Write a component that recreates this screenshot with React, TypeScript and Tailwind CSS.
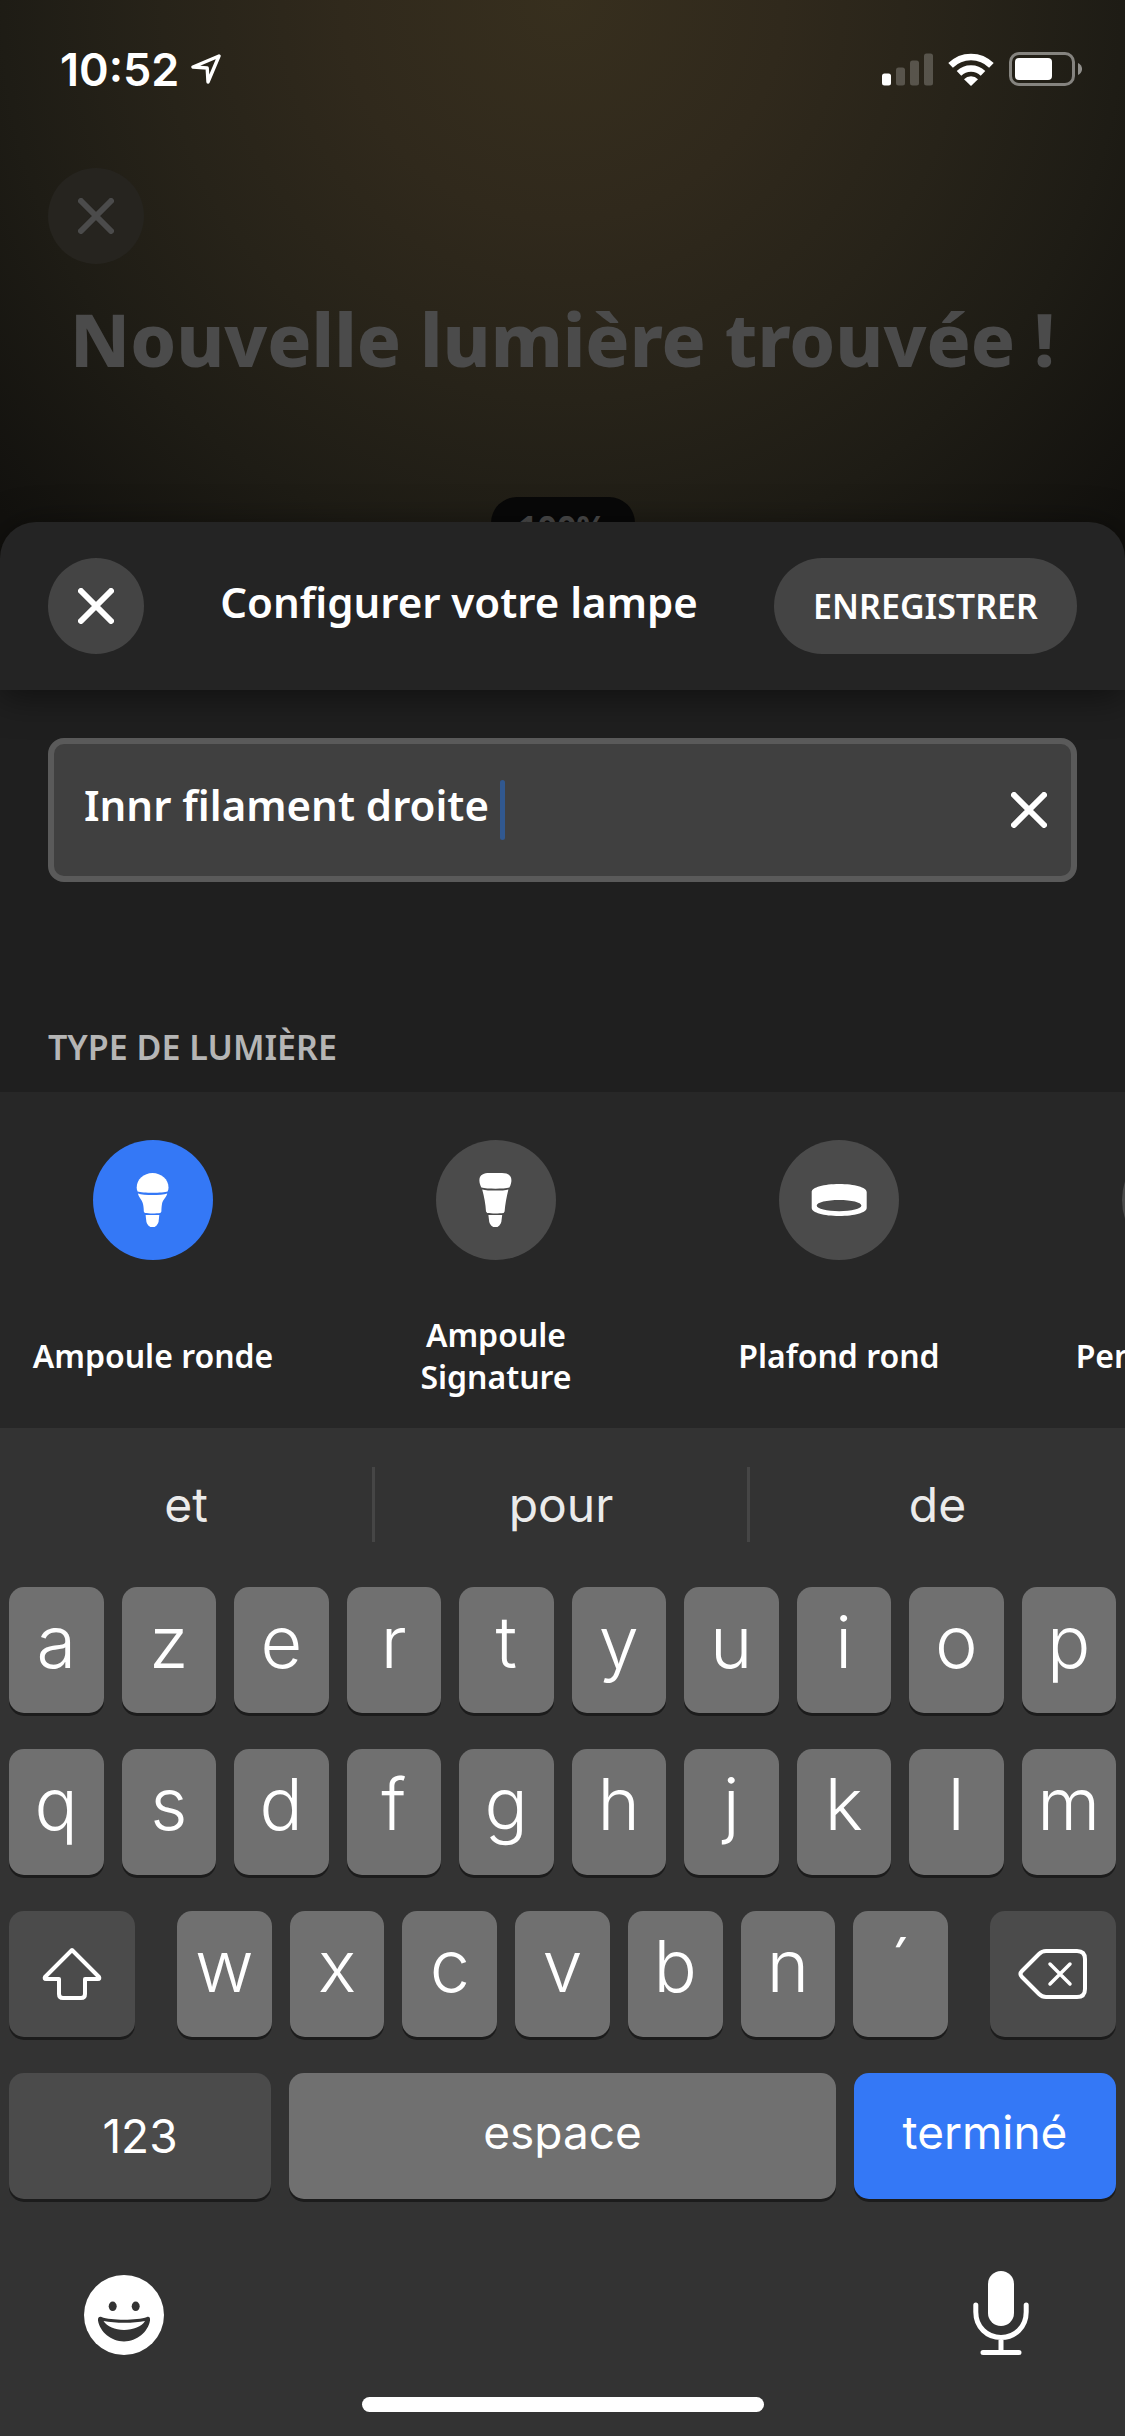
import { useState } from 'react';
import type { ReactNode } from 'react';

const LIGHT_TYPES = [
  { id: 'round', label: 'Ampoule ronde', icon: <RoundBulb /> },
  { id: 'signature', label: 'Ampoule Signature', icon: <SignatureBulb /> },
  { id: 'ceiling', label: 'Plafond rond', icon: <CeilingLamp /> },
  { id: 'pendant', label: 'Pendant rond', icon: <PendantLamp /> },
];

const SUGGESTIONS = ['et', 'pour', 'de'];
const ROW_1 = ['a', 'z', 'e', 'r', 't', 'y', 'u', 'i', 'o', 'p'];
const ROW_2 = ['q', 's', 'd', 'f', 'g', 'h', 'j', 'k', 'l', 'm'];
const ROW_3 = ['w', 'x', 'c', 'v', 'b', 'n', '´'];

function RoundBulb() {
  return (
    <svg viewBox="0 0 120 120" className="size-full" fill="white">
      <path d="M44.6 51.4C43.9 50 43.7 48.8 43.7 47.5C43.7 39.4 50.8 33 59.5 33S75.5 39.4 75.5 47.5C75.5 48.8 75.3 50 74.6 51.4C70 53.1 49.5 53.1 44.6 51.4Z" />
      <path d="M45 53.6C51 55.6 68 55.6 74.2 53.6C73.8 57 69.6 60 69 64C68.5 67 68.4 69 68.4 71.5L67.4 73C63 73.6 56 73.6 51.8 73L50.8 71.5C50.8 69 50.6 67 50 64C49.2 60 45.4 57 45 53.6Z" />
      <path d="M52.6 75H66.3L65.6 81.5C64.8 84.6 62.6 87 61 87H58C56.4 87 54 84.6 53.4 81.5Z" />
    </svg>
  );
}

function SignatureBulb() {
  return (
    <svg viewBox="0 0 120 120" className="size-full" fill="white">
      <path d="M45.4 47.6C43.8 44.5 43.4 42.5 43.4 40C43.4 34.5 48.5 33 53 33H66C70.5 33 75.4 34.5 75.4 40C75.4 42.5 75 44.5 73.4 47.6C68 49.2 51 49.2 45.4 47.6Z" />
      <path d="M46.2 49.4C52 51 67 51 72.4 49.4C70.6 57 69.2 64 68.6 71.5L67.6 73C63 73.6 55.6 73.6 51.2 73L50 71.5C49.6 64 48.2 57 46.2 49.4Z" />
      <path d="M52.4 75H66.2L65.4 81.5C64.6 84.6 62.4 87 60.8 87H57.8C56.2 87 53.8 84.6 53.2 81.5Z" />
    </svg>
  );
}

function CeilingLamp() {
  return (
    <svg viewBox="0 0 120 120" className="size-full" fill="white">
      <path
        fillRule="evenodd"
        d="M32.7 52C32.7 47.4 45 44 60.2 44S87.7 47.4 87.7 52V68C87.7 72.6 75.4 76 60.2 76S32.7 72.6 32.7 68ZM60.2 60C48 60 37.7 62.4 37.7 65.6S48 71.2 60.2 71.2S82.4 68.8 82.4 65.6S72.4 60 60.2 60Z"
      />
    </svg>
  );
}

function PendantLamp() {
  return (
    <svg viewBox="0 0 120 120" className="size-full" fill="white">
      <path d="M59 33H61V52C70 53 77 60 78 70H42C43 60 50 53 59 52Z" />
    </svg>
  );
}

function CrossIcon() {
  return (
    <svg viewBox="0 0 36 36" className="size-9" fill="none" stroke="currentColor" strokeWidth="6" strokeLinecap="round">
      <path d="M3 3L33 33M33 3L3 33" />
    </svg>
  );
}

function StatusBar() {
  return (
    <header className="flex h-[138px] items-center justify-between pr-[43px] pl-[60px] font-['Inter',sans-serif]">
      <div className="flex items-center gap-3">
        <span className="text-[45px] leading-none font-semibold">10:52</span>
        <svg viewBox="0 0 30 30" className="size-[30px]" fill="none" stroke="white" strokeWidth="3.4" strokeLinejoin="round">
          <path d="M28 2L2 13L16.2 14L17 28Z" />
        </svg>
      </div>
      <div className="flex items-center gap-[15px]">
        <svg viewBox="0 0 51 33" className="h-[33px] w-[51px]" fill="white">
          <rect x="0" y="20.5" width="9" height="12" rx="2.5" />
          <rect x="14" y="14.5" width="9" height="18" rx="2.5" opacity="0.22" />
          <rect x="28" y="7.5" width="9" height="25" rx="2.5" opacity="0.22" />
          <rect x="42" y="0.5" width="9" height="32" rx="2.5" opacity="0.22" />
        </svg>
        <svg viewBox="0 0 46 33" className="h-[33px] w-[46px]" fill="none" stroke="white" strokeWidth="6.5">
          <path d="M2.6 12.4A28.8 28.8 0 0 1 43.4 12.4" />
          <path d="M11 20.4A17.2 17.2 0 0 1 35 20.4" />
          <path d="M23 33L16 26.2A10 10 0 0 1 30 26.2Z" fill="white" stroke="none" />
        </svg>
        <svg viewBox="0 0 73 34" className="h-[34px] w-[73px]">
          <rect x="1.5" y="1.5" width="63" height="31" rx="8.5" fill="none" stroke="white" strokeOpacity="0.45" strokeWidth="3" />
          <rect x="6" y="6" width="37" height="22" rx="4" fill="white" />
          <path d="M69 11C74.4 13.5 74.4 20.5 69 23Z" fill="white" fillOpacity="0.5" />
        </svg>
      </div>
    </header>
  );
}

function Key({ children, className, label }: { children: ReactNode; className: string; label?: string }) {
  return (
    <button
      type="button"
      aria-label={label}
      className={`flex h-[126px] items-center justify-center rounded-[15px] shadow-[0_3px_0_#1c1c1c] ${className}`}
    >
      {children}
    </button>
  );
}

function LetterKeys({ letters }: { letters: string[] }) {
  return (
    <div className="flex flex-1 gap-[18px]">
      {letters.map((l) => (
        <Key key={l} className="min-w-0 flex-1 bg-[#707070] pb-4 text-[72px] leading-none font-light">{l}</Key>
      ))}
    </div>
  );
}

function Keyboard() {
  return (
    <section aria-label="Clavier" className="flex flex-1 flex-col bg-[#333333] font-['Inter',sans-serif]">
      <div className="grid grid-cols-3 divide-x-[3px] divide-[#464646] pt-[39px] pb-[45px]">
        {SUGGESTIONS.map((s) => (
          <button key={s} type="button" className="h-[75px] text-5xl text-[#ebebeb]">{s}</button>
        ))}
      </div>

      <div className="flex flex-col gap-9 px-[9px]">
        <LetterKeys letters={ROW_1} />
        <LetterKeys letters={ROW_2} />
        <div className="flex gap-[42px]">
          <Key label="Majuscule" className="w-[126px] bg-[#4b4b4b]">
            <svg viewBox="0 0 60 54" className="h-[54px] w-[60px]" fill="none" stroke="white" strokeWidth="4" strokeLinejoin="round">
              <path d="M30 3L57 30Q58 32 56 32H43V47Q43 51 39 51H21Q17 51 17 47V32H4Q2 32 3 30Z" />
            </svg>
          </Key>
          <LetterKeys letters={ROW_3} />
          <Key label="Effacer" className="w-[126px] bg-[#4b4b4b]">
            <svg viewBox="0 0 70 52" className="h-[52px] w-[70px]" fill="none" stroke="white" strokeWidth="4" strokeLinecap="round" strokeLinejoin="round">
              <path d="M28 3H59Q67 3 67 11V41Q67 49 59 49H28Q24 49 21 46L4 29Q1 26 4 23L21 6Q24 3 28 3Z" />
              <path d="M32 16L52 36M52 16L32 36" strokeWidth="3.5" />
            </svg>
          </Key>
        </div>
        <div className="flex gap-[18px]">
          <Key className="w-[262px] bg-[#4b4b4b] text-[46px]">123</Key>
          <Key className="flex-1 bg-[#707070] pb-2 text-[46px]">espace</Key>
          <Key className="w-[262px] bg-[#3478f6] pb-2 text-[46px]">terminé</Key>
        </div>
      </div>

      <div className="mt-[72px] flex items-end justify-between px-[84px]">
        <button type="button" aria-label="Emoji">
          <svg viewBox="0 0 80 80" className="size-20">
            <circle cx="40" cy="40" r="40" fill="white" />
            <ellipse cx="28.7" cy="31.3" rx="4" ry="4.8" fill="#333333" />
            <ellipse cx="51.7" cy="31.3" rx="4" ry="4.8" fill="#333333" />
            <path d="M17.5 42C27 45.6 53 45.6 63 42C65.5 41.4 66.4 43 66 45.5C64 57 53 66.4 40 66.4S16 57 14 45.5C13.6 43 15 41.4 17.5 42Z" fill="#333333" />
            <path d="M19.5 46C31 48.4 50 48.4 61 46C58 51.5 49 55 40 55S23 51.5 19.5 46Z" fill="white" />
          </svg>
        </button>
        <button type="button" aria-label="Dictée" className="mr-3">
          <svg viewBox="0 0 56 84" className="h-[84px] w-14" fill="none" stroke="white" strokeWidth="5" strokeLinecap="round">
            <rect x="15" y="0" width="26" height="55" rx="13" fill="white" stroke="none" />
            <path d="M2.8 34V41C2.8 56 14 66.5 28 66.5S53.2 56 53.2 41V34M28 67V81M10 81.4H46" />
          </svg>
        </button>
      </div>

      <div className="mx-auto mt-auto mb-6 h-[15px] w-[402px] rounded-full bg-white" />
    </section>
  );
}

export default function App() {
  const [name, setName] = useState('Innr filament droite ');
  const [type, setType] = useState('round');

  return (
    <div className="flex min-h-screen flex-col overflow-hidden bg-[#11110d] bg-[radial-gradient(circle_at_50%_0,#372f1e_0px,#30291c_220px,#272319_400px,#1e1c15_560px,#12110e_760px)] font-['Noto_Sans',sans-serif] text-white">
      <StatusBar />

      {/* Dimmed page behind the sheet */}
      <div className="flex flex-col px-12 pt-[30px] text-[#4b4b4b]">
        <button type="button" aria-label="Fermer" className="flex size-24 items-center justify-center rounded-full bg-[#26241f]">
          <CrossIcon />
        </button>
        <h1 className="mt-[30px] text-center text-[73px] leading-[90px] font-extrabold whitespace-nowrap">Nouvelle lumière trouvée !</h1>
        <div className="mx-auto mt-[113px] flex h-[60px] w-36 items-center justify-center rounded-[26px] bg-[#080808] text-[34px] leading-none font-bold">100%</div>
      </div>

      <main className="relative -mt-[35px] flex flex-1 flex-col">
        <div className="z-10 flex items-center rounded-t-[36px] bg-[#242424] px-12 py-9 shadow-[0_6px_36px_rgba(0,0,0,0.5)]">
          <button type="button" aria-label="Fermer" className="flex size-24 items-center justify-center rounded-full bg-[#444444]">
            <CrossIcon />
          </button>
          <h2 className="flex-1 pb-2 text-center text-[42px] leading-none font-semibold whitespace-nowrap">Configurer votre lampe</h2>
          <button type="button" className="h-24 w-[303px] rounded-full bg-[#444444] text-[34px] font-semibold">ENREGISTRER</button>
        </div>

        <div className="bg-[#1f1f1f] px-12 pt-12 pb-6">
          <div className="flex h-36 items-center rounded-[16px] border-[6px] border-[#5a5a5a] bg-[#404040] pr-6 pl-[30px]">
            <input
              aria-label="Nom de la lampe"
              value={name}
              onChange={(e) => setName(e.target.value)}
              className="field-sizing-content pb-3 text-[42px] font-semibold whitespace-pre caret-transparent outline-none"
            />
            <span className="h-[60px] w-[5px] rounded-full bg-[#31588f]" />
            <button type="button" aria-label="Effacer le nom" className="ml-auto" onClick={() => setName('')}>
              <CrossIcon />
            </button>
          </div>
          <h3 className="mt-36 text-[34px] leading-[42px] font-semibold text-[#b5b5b5]">TYPE DE LUMIÈRE</h3>
        </div>

        <div className="flex gap-[37px] overflow-hidden bg-[#272727] pt-12 pb-[30px]">
          {LIGHT_TYPES.map((t) => (
            <label key={t.id} className="relative flex w-[306px] shrink-0 flex-col items-center px-7">
              <input type="radio" name="light-type" className="peer sr-only" checked={type === t.id} onChange={() => setType(t.id)} />
              <span className="size-[120px] rounded-full bg-[#4b4b4b] peer-checked:bg-[#3478f6]">{t.icon}</span>
              <span className="mt-[54px] flex h-[84px] items-center text-center text-[32px] leading-[42px] font-semibold">{t.label}</span>
            </label>
          ))}
        </div>

        <Keyboard />
      </main>
    </div>
  );
}
